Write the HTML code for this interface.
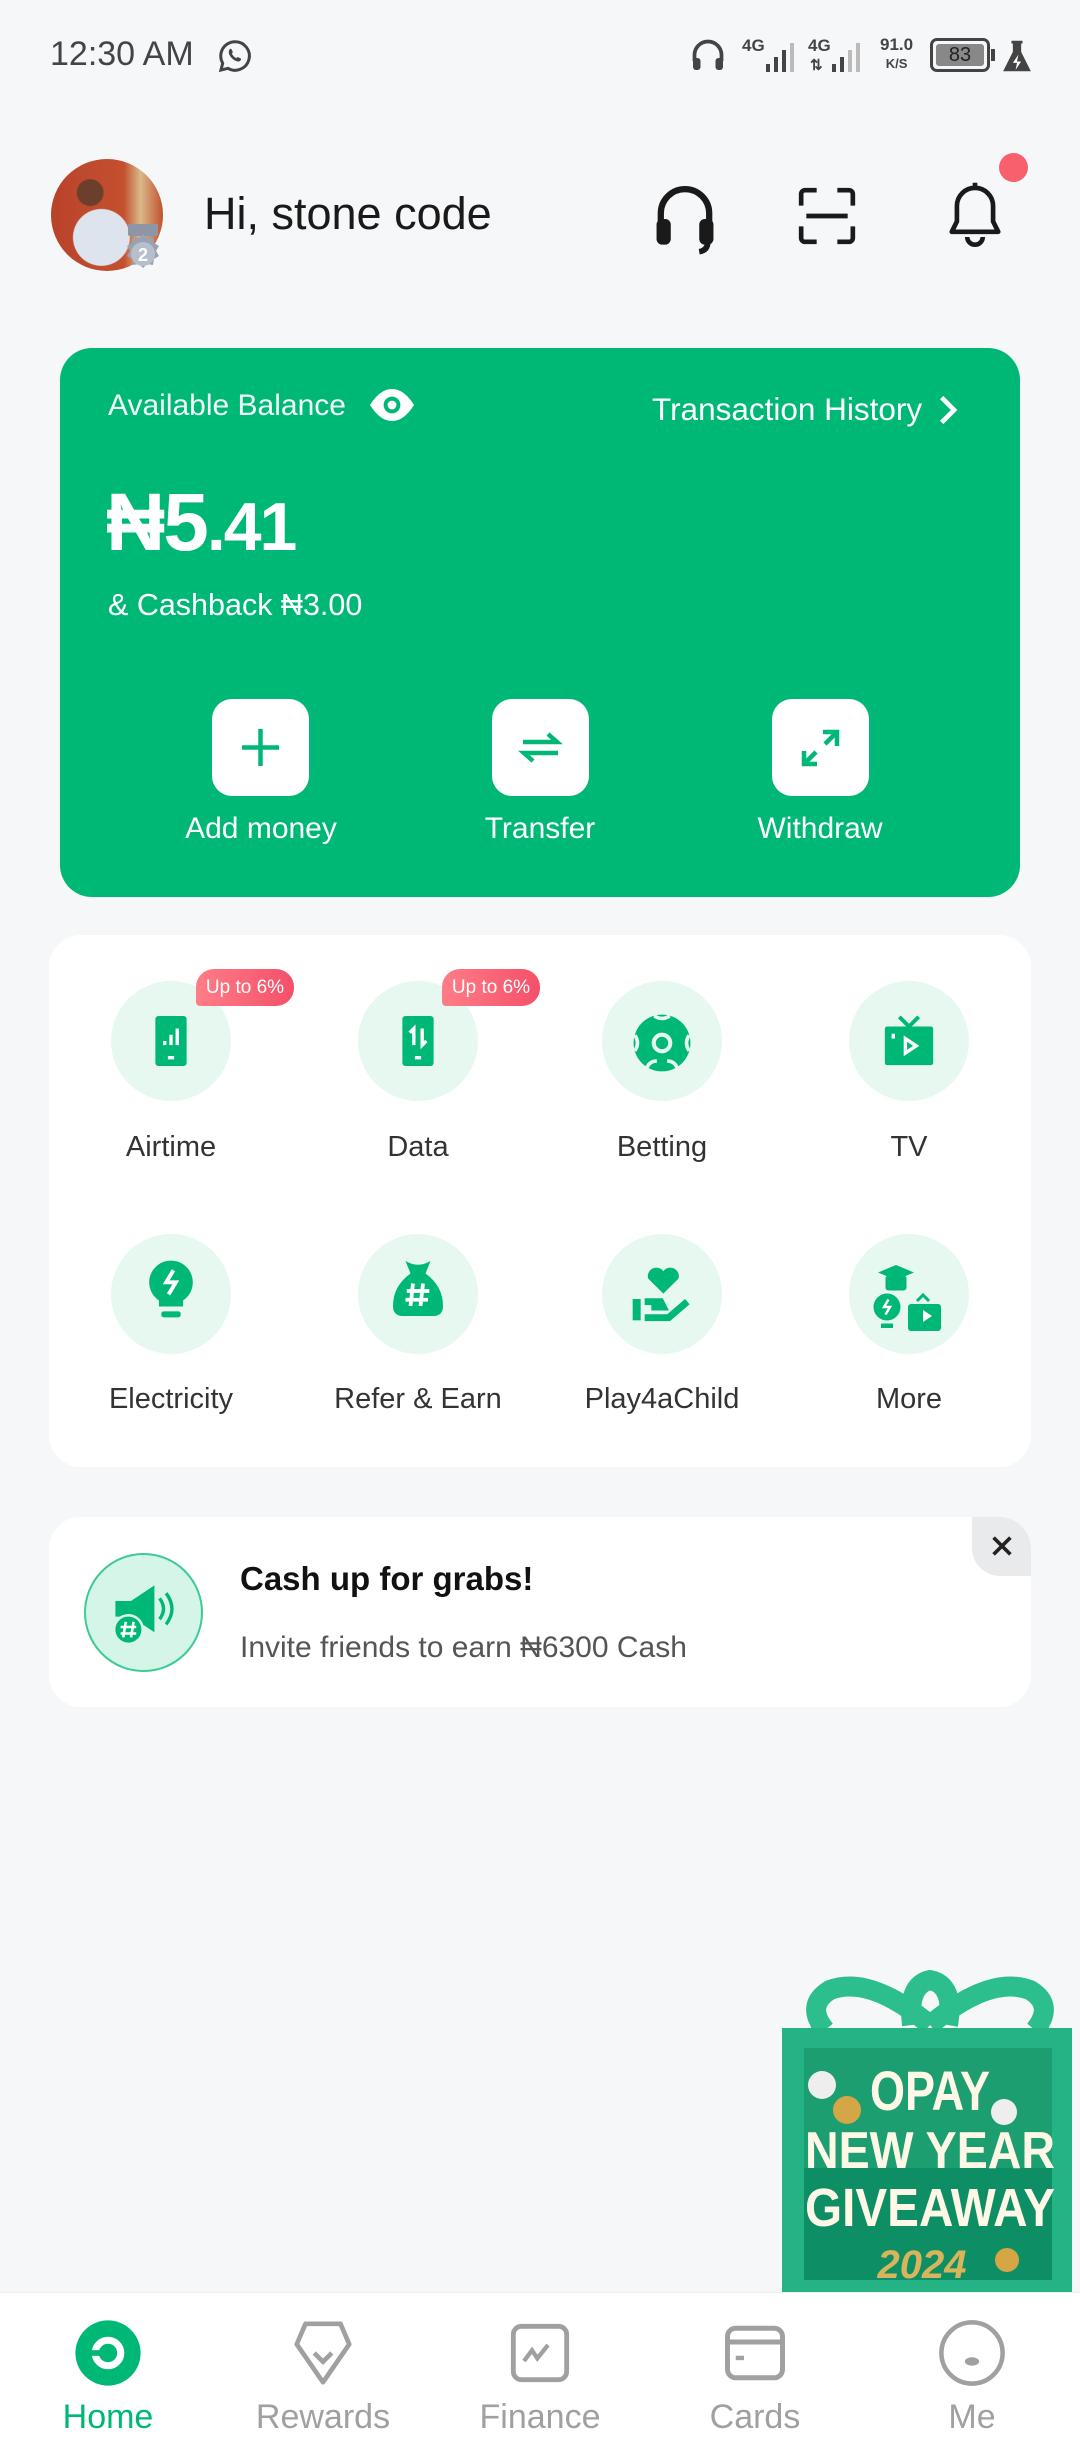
<!DOCTYPE html>
<html><head><meta charset="utf-8"><style>
*{margin:0;padding:0;box-sizing:border-box}
body{width:1080px;height:2460px;background:#F6F7F9;font-family:"Liberation Sans",sans-serif;position:relative;overflow:hidden}
.a{position:absolute}
.card{position:absolute;background:#fff;border-radius:32px}
.btn{position:absolute;width:97px;height:97px;background:#fff;border-radius:20px;top:699px}
.bl{position:absolute;top:812px;color:#fff;font-size:30px;width:240px;text-align:center}
.ic{position:absolute;width:120px;height:120px;border-radius:50%;background:#E7F8F0}
.lb{position:absolute;width:240px;text-align:center;color:#333;font-size:29px}
.badge{position:absolute;width:98px;height:37px;border-radius:18px 18px 18px 4px;background:linear-gradient(90deg,#FF7D87,#F4506A);color:#fff;font-size:19px;text-align:center;line-height:37px}
.nl{position:absolute;top:2398px;width:200px;text-align:center;font-size:34px;color:#a0a0a0}
</style></head><body>
<!-- status bar -->
<div class="a" style="left:50px;top:35px;font-size:34px;color:#444">12:30 AM</div>
<svg class="a" style="left:217px;top:38px" width="36" height="36" viewBox="0 0 24 24"><path d="M12 2.5a9.5 9.5 0 0 0-8.2 14.3L2.6 21.4l4.7-1.2A9.5 9.5 0 1 0 12 2.5z" fill="none" stroke="#444" stroke-width="2"/><path d="M8.5 7.5c.5-.5 1-.4 1.3.2l.7 1.6c.1.4-.3.8-.6 1.1.6 1.3 1.7 2.4 3 3 .3-.3.7-.8 1.1-.6l1.6.7c.5.3.6.8.2 1.3-.8 1-2 1.1-3.5.4-1.8-.9-3.3-2.4-4.1-4.1-.5-1.4-.5-2.7.3-3.6z" fill="#444"/></svg>
<svg class="a" style="left:690px;top:38px" width="36" height="40" viewBox="0 0 24 26"><path d="M3 15v-4a9 9 0 0 1 18 0v4" fill="none" stroke="#444" stroke-width="2.5"/><rect x="2" y="13" width="5" height="8" rx="2" fill="#444"/><rect x="17" y="13" width="5" height="8" rx="2" fill="#444"/></svg>
<div class="a" style="left:742px;top:36px;font-size:17px;color:#444;font-weight:bold">4G</div>
<svg class="a" style="left:764px;top:40px" width="38" height="34"><rect x="2" y="24" width="4" height="8" fill="#444"/><rect x="10" y="17" width="4" height="15" fill="#444"/><rect x="18" y="10" width="4" height="22" fill="#444"/><rect x="26" y="3" width="4" height="29" fill="#bbb"/></svg>
<div class="a" style="left:808px;top:36px;font-size:17px;color:#444;font-weight:bold">4G</div>
<div class="a" style="left:810px;top:56px;font-size:15px;color:#444;font-weight:bold">⇅</div>
<svg class="a" style="left:830px;top:40px" width="38" height="34"><rect x="2" y="24" width="4" height="8" fill="#444"/><rect x="10" y="17" width="4" height="15" fill="#444"/><rect x="18" y="10" width="4" height="22" fill="#bbb"/><rect x="26" y="3" width="4" height="29" fill="#bbb"/></svg>
<div class="a" style="left:880px;top:36px;font-size:17px;color:#444;font-weight:bold;line-height:18px;text-align:center">91.0<br><span style="font-size:13px">K/S</span></div>
<div class="a" style="left:930px;top:38px;width:60px;height:34px;border:3px solid #444;border-radius:7px;padding:3px"><div style="background:#888;height:100%;border-radius:3px;color:#222;font-size:20px;text-align:center;line-height:22px">83</div></div>
<div class="a" style="left:991px;top:49px;width:4px;height:12px;background:#444"></div>
<svg class="a" style="left:1000px;top:38px" width="34" height="36" viewBox="0 0 24 26"><path d="M8 2h8v2h-1v6l7 14H2l7-14V4H8z" fill="#444"/><path d="M13 12l-4 6h3l-1 5 4-6h-3z" fill="#fff"/></svg>

<!-- header -->
<div class="a" style="left:51px;top:159px;width:112px;height:112px;border-radius:50%;background:radial-gradient(circle at 45% 70%,#dde4ee 0 28%,transparent 29%),radial-gradient(circle at 35% 30%,#6b3f2c 0 12%,transparent 13%),linear-gradient(90deg,#b9432a 0,#c4502f 65%,#d9b98a 80%,#c4502f 100%)"></div>
<svg class="a" style="left:118px;top:222px" width="50" height="58" viewBox="0 0 50 58"><rect x="10" y="2" width="30" height="12" rx="2" fill="#8d95a6"/><path d="M25 12l4 4 6-1 1 6 5 3-3 5 3 5-5 3-1 6-6-1-4 4-4-4-6 1-1-6-5-3 3-5-3-5 5-3 1-6 6 1z" fill="#9aa1b1"/><circle cx="25" cy="32" r="12" fill="#b8bfcc"/><text x="25" y="39" font-size="18" font-weight="bold" fill="#fff" text-anchor="middle" font-family="Liberation Sans">2</text></svg>
<div class="a" style="left:204px;top:188px;font-size:45px;color:#1a1a1a">Hi, stone code</div>
<svg class="a" style="left:650px;top:182px" width="70" height="74" viewBox="0 0 24 26"><path d="M3.5 15v-4a8.5 8.5 0 0 1 17 0v4" fill="none" stroke="#1a1a1a" stroke-width="2.2"/><rect x="2" y="13" width="5" height="9" rx="2" fill="#1a1a1a"/><rect x="17" y="13" width="5" height="9" rx="2" fill="#1a1a1a"/><path d="M20 21q0 3-3 3.5" fill="none" stroke="#1a1a1a" stroke-width="2"/></svg>
<svg class="a" style="left:796px;top:185px" width="62" height="62" viewBox="0 0 24 24"><path d="M2 8V3.5A1.5 1.5 0 0 1 3.5 2H8M16 2h4.5A1.5 1.5 0 0 1 22 3.5V8M22 16v4.5a1.5 1.5 0 0 1-1.5 1.5H16M8 22H3.5A1.5 1.5 0 0 1 2 20.5V16M4 12h16" fill="none" stroke="#1a1a1a" stroke-width="1.8"/></svg>
<svg class="a" style="left:944px;top:180px" width="62" height="70" viewBox="0 0 24 27"><path d="M12 3a7 7 0 0 0-7 7v6l-2 4h18l-2-4v-6a7 7 0 0 0-7-7zM12 1v2M9 22a3 3 0 0 0 6 0" fill="none" stroke="#1a1a1a" stroke-width="1.8" stroke-linejoin="round"/></svg>
<div class="a" style="left:999px;top:153px;width:29px;height:29px;border-radius:50%;background:#F7606C"></div>

<!-- balance card -->
<div class="a" style="left:60px;top:348px;width:960px;height:549px;background:#00B876;border-radius:32px"></div>
<div class="a" style="left:108px;top:389px;font-size:30px;color:#fff;opacity:.95">Available Balance</div>
<svg class="a" style="left:368px;top:386px" width="48" height="38" viewBox="0 0 24 18"><path d="M1 9Q6 1 12 1t11 8q-5 8-11 8T1 9z" fill="#fff"/><circle cx="12" cy="9" r="4.2" fill="#00B876"/><circle cx="12" cy="9" r="2.2" fill="#fff"/></svg>
<div class="a" style="left:652px;top:391px;font-size:31.5px;color:#fff">Transaction History</div>
<svg class="a" style="left:936px;top:394px" width="22" height="32" viewBox="0 0 12 18"><path d="M3 2l7 7-7 7" fill="none" stroke="#fff" stroke-width="2.6"/></svg>
<div class="a" style="left:106px;top:476px;color:#fff;font-weight:bold;font-size:82px;letter-spacing:-2px">₦5<span style="font-size:68px">.41</span></div>
<div class="a" style="left:108px;top:588px;font-size:30.5px;color:#fff">&amp; Cashback ₦3.00</div>
<div class="btn" style="left:212px"><svg width="97" height="97" viewBox="0 0 97 97"><path d="M48.5 30v37M30 48.5h37" stroke="#00B876" stroke-width="4.5"/></svg></div>
<div class="btn" style="left:492px"><svg width="97" height="97" viewBox="0 0 97 97"><path d="M31 43h34l-9-8M66 54H32l9 8" fill="none" stroke="#00B876" stroke-width="4.5"/></svg></div>
<div class="btn" style="left:772px"><svg width="97" height="97" viewBox="0 0 97 97"><path d="M51 33h14v14M65 33L53 45M32 52v13h13M32 65l12-12" fill="none" stroke="#00B876" stroke-width="4.5"/></svg></div>
<div class="bl" style="left:141px">Add money</div>
<div class="bl" style="left:420px">Transfer</div>
<div class="bl" style="left:700px">Withdraw</div>

<!-- services -->
<div class="card" style="left:49px;top:935px;width:982px;height:532px"></div>
<div class="ic" style="left:111px;top:981px"></div>
<div class="ic" style="left:358px;top:981px"></div>
<div class="ic" style="left:602px;top:981px"></div>
<div class="ic" style="left:849px;top:981px"></div>
<div class="ic" style="left:111px;top:1234px"></div>
<div class="ic" style="left:358px;top:1234px"></div>
<div class="ic" style="left:602px;top:1234px"></div>
<div class="ic" style="left:849px;top:1234px"></div>
<svg class="a" style="left:146px;top:1016px" width="50" height="50" viewBox="0 0 24 24"><rect x="4.5" y="0" width="15" height="24" rx="1.5" fill="#00B876"/><path d="M9 12v2M12 9v5M15 6v8M10.5 20h3" stroke="#fff" stroke-width="1.6"/></svg>
<svg class="a" style="left:393px;top:1016px" width="50" height="50" viewBox="0 0 24 24"><rect x="4.5" y="0" width="15" height="24" rx="1.5" fill="#00B876"/><path d="M10 14V6l-2 2M14 6v8l2-2M10.5 20h3" fill="none" stroke="#fff" stroke-width="1.6"/></svg>
<svg class="a" style="left:631px;top:1012px" width="62" height="62" viewBox="0 0 24 24"><circle cx="12" cy="12" r="11" fill="#00B876"/><circle cx="12" cy="12" r="3.2" fill="none" stroke="#E7F8F0" stroke-width="1.6"/><path d="M9 1.5q3 2 6 0M1.5 9q2 3 0 6M22.5 9q-2 3 0 6M6 22q1-3 4-3M18 22q-1-3-4-3" fill="none" stroke="#E7F8F0" stroke-width="1.4"/></svg>
<svg class="a" style="left:880px;top:1012px" width="58" height="58" viewBox="0 0 24 24"><path d="M8 2l4 4 4-4" fill="none" stroke="#00B876" stroke-width="1.6"/><rect x="2" y="6" width="20" height="16" rx="1" fill="#00B876"/><path d="M10.5 11v6l4.5-3z" fill="none" stroke="#fff" stroke-width="1.4"/><path d="M5.5 9v2" stroke="#fff" stroke-width="1.4"/></svg>
<svg class="a" style="left:142px;top:1258px" width="58" height="68" viewBox="0 0 24 28"><path d="M12 1a9 9 0 0 0-5 16.5V20h10v-2.5A9 9 0 0 0 12 1z" fill="#00B876"/><path d="M13 5l-3 5h4l-3 5" fill="none" stroke="#fff" stroke-width="1.6"/><rect x="8" y="22" width="8" height="2.5" rx="1" fill="#00B876"/></svg>
<svg class="a" style="left:388px;top:1256px" width="60" height="70" viewBox="0 0 24 28"><path d="M7 2q5 3 10 0l-2 5H9z" fill="#00B876"/><path d="M9 7h6q7 5 7 13 0 4-4 4H6q-4 0-4-4 0-8 7-13z" fill="#00B876"/><path d="M10 11l-1 9M14 11l-1 9M7.5 14h9M7 17.5h9" stroke="#fff" stroke-width="1.5"/></svg>
<svg class="a" style="left:630px;top:1258px" width="64" height="66" viewBox="0 0 24 24"><path d="M12.5 13L6.8 7.3a3.2 3.2 0 0 1 5.7-2.7 3.2 3.2 0 0 1 5.7 2.7z" fill="#00B876"/><rect x="1" y="15" width="3" height="8" fill="#00B876"/><path d="M5.5 16h6l1 2H8M5.5 22h9l7-6" fill="none" stroke="#00B876" stroke-width="2.6"/></svg>
<svg class="a" style="left:866px;top:1258px" width="90" height="80" viewBox="0 0 30 26"><path d="M10 2l6 2.5-6 2.5-6-2.5z" fill="#00B876"/><rect x="6.5" y="5.5" width="7" height="5" rx="1" fill="#00B876"/><circle cx="7" cy="16" r="4.5" fill="#00B876"/><rect x="5" y="21.5" width="4" height="1.5" fill="#00B876"/><rect x="14" y="15" width="11" height="9" rx="1" fill="#00B876"/><path d="M17 14l2-2 2 2" fill="none" stroke="#00B876" stroke-width="1"/><path d="M19 17v4l3-2z" fill="#fff"/><path d="M7.5 13.5l-1.5 2.5h2l-1.5 2.5" stroke="#fff" stroke-width=".8" fill="none"/></svg>
<div class="badge" style="left:196px;top:969px">Up to 6%</div>
<div class="badge" style="left:442px;top:969px">Up to 6%</div>
<div class="lb" style="left:51px;top:1131px">Airtime</div>
<div class="lb" style="left:298px;top:1131px">Data</div>
<div class="lb" style="left:542px;top:1131px">Betting</div>
<div class="lb" style="left:789px;top:1131px">TV</div>
<div class="lb" style="left:51px;top:1383px">Electricity</div>
<div class="lb" style="left:298px;top:1383px">Refer &amp; Earn</div>
<div class="lb" style="left:542px;top:1383px">Play4aChild</div>
<div class="lb" style="left:789px;top:1383px">More</div>

<!-- promo -->
<div class="card" style="left:49px;top:1517px;width:982px;height:190px;overflow:hidden"><div class="a" style="right:0;top:0;width:59px;height:59px;background:#E9EAEC;border-radius:0 0 0 28px"></div></div>
<svg class="a" style="left:988px;top:1532px" width="28" height="28" viewBox="0 0 20 20"><path d="M4 4l12 12M16 4L4 16" stroke="#222" stroke-width="2.6"/></svg>
<div class="a" style="left:84px;top:1553px;width:119px;height:119px;border-radius:50%;background:#D4F5E8;border:2px solid #3CCB95"></div>
<svg class="a" style="left:104px;top:1575px" width="80" height="78" viewBox="0 0 30 30"><path d="M4 10h6l9-6v18l-9-6H4z" fill="#00B876"/><path d="M21 9q3 4 0 8M23.5 7q4.5 6 0 12" fill="none" stroke="#00B876" stroke-width="1.3"/><circle cx="9" cy="21" r="5.5" fill="#00B876" stroke="#D4F5E8" stroke-width="1"/><path d="M8 18l-1 6M11 18l-1 6M6 20h6M6 22.5h6" stroke="#fff" stroke-width="1"/></svg>
<div class="a" style="left:240px;top:1560px;font-size:33px;font-weight:bold;color:#111">Cash up for grabs!</div>
<div class="a" style="left:240px;top:1631px;font-size:30px;color:#555">Invite friends to earn ₦6300 Cash</div>

<!-- gift -->
<svg class="a" style="left:782px;top:1970px" width="298" height="326" viewBox="0 0 298 326">
<path d="M148 55q-60-50-100-35-25 15-5 40M148 55q60-50 100-35 25 15 5 40M130 55q-5-40 18-45 25 5 18 45" fill="none" stroke="#2DBE8E" stroke-width="20"/>
<rect x="0" y="58" width="290" height="266" fill="#24B384"/>
<rect x="22" y="78" width="248" height="232" fill="#0E8E65"/>
<rect x="22" y="78" width="248" height="120" fill="#1D9E70"/>
<circle cx="40" cy="115" r="14" fill="#eee"/><circle cx="65" cy="140" r="14" fill="#d4a645"/><circle cx="222" cy="142" r="13" fill="#eee"/><circle cx="225" cy="290" r="12" fill="#d4a645"/>
<g font-family="Liberation Sans" font-weight="bold" fill="#FFF8E6" text-anchor="middle">
<text x="148" y="140" font-size="56" textLength="120" lengthAdjust="spacingAndGlyphs">OPAY</text>
<text x="148" y="198" font-size="52" textLength="250" lengthAdjust="spacingAndGlyphs">NEW YEAR</text>
<text x="148" y="256" font-size="54" textLength="250" lengthAdjust="spacingAndGlyphs">GIVEAWAY</text>
<text x="140" y="308" font-size="40" fill="#D8B45A" font-style="italic">2024</text>
</g></svg>

<!-- bottom nav -->
<div class="a" style="left:0;top:2292px;width:1080px;height:168px;background:#fff;border-top:1px solid #eee"></div>
<svg class="a" style="left:74px;top:2318px" width="68" height="70" viewBox="0 0 24 24"><circle cx="12" cy="12" r="11.5" fill="#00B876"/><circle cx="12" cy="12" r="4.5" fill="none" stroke="#fff" stroke-width="2.5"/><rect x="6" y="11" width="3" height="2" fill="#00B876"/></svg>
<svg class="a" style="left:288px;top:2318px" width="70" height="70" viewBox="0 0 24 24"><path d="M6 2h12l3 7-9 13L3 9z" fill="none" stroke="#a0a0a0" stroke-width="1.6" stroke-linejoin="round"/><path d="M9 12l3 3 3-3" fill="none" stroke="#a0a0a0" stroke-width="1.6"/></svg>
<svg class="a" style="left:508px;top:2320px" width="64" height="66" viewBox="0 0 24 24"><rect x="2" y="2" width="20" height="20" rx="3" fill="none" stroke="#a0a0a0" stroke-width="1.8"/><path d="M6 15l3-4 2 3 4-5" fill="none" stroke="#a0a0a0" stroke-width="1.6"/></svg>
<svg class="a" style="left:722px;top:2320px" width="66" height="66" viewBox="0 0 24 24"><rect x="2" y="3" width="20" height="18" rx="3" fill="none" stroke="#a0a0a0" stroke-width="1.8"/><path d="M2 8h20" stroke="#a0a0a0" stroke-width="1.8"/><rect x="5" y="13" width="3" height="1.6" fill="#a0a0a0"/></svg>
<svg class="a" style="left:938px;top:2318px" width="68" height="70" viewBox="0 0 24 24"><circle cx="12" cy="12" r="10.8" fill="none" stroke="#a0a0a0" stroke-width="1.6"/><ellipse cx="12" cy="15" rx="2.5" ry="1.5" fill="#a0a0a0"/></svg>
<div class="nl" style="left:8px;color:#00B876">Home</div>
<div class="nl" style="left:223px">Rewards</div>
<div class="nl" style="left:440px">Finance</div>
<div class="nl" style="left:655px">Cards</div>
<div class="nl" style="left:872px">Me</div>
</body></html>
